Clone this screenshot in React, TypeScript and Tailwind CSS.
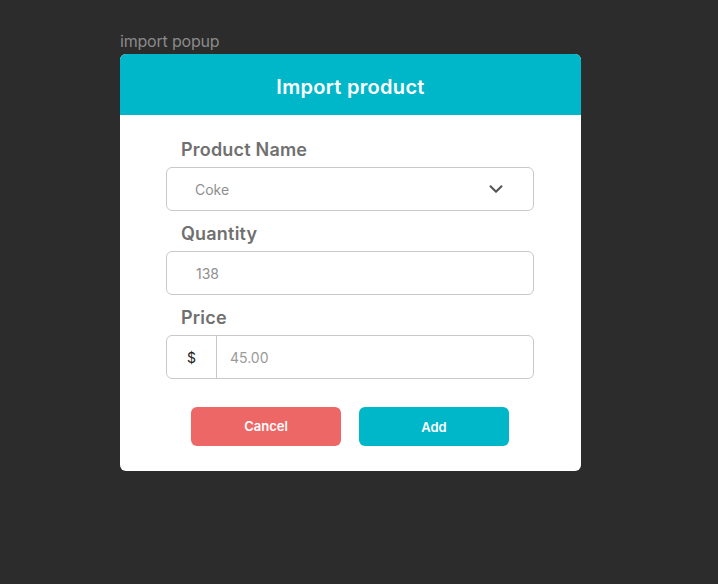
import { ChevronDown } from 'lucide-react'

export default function App() {
  return (
    <div className="w-[718px] h-[584px] bg-[#2c2c2c] font-['Inter',sans-serif]">
      <div className="pt-[31px] pl-[120px]">
        <div className="text-[16px] leading-[20px] text-[#8a8a8a] mb-[3px] tracking-[-0.2px]">import popup</div>

        <div className="w-[461px] bg-white rounded-[6px] overflow-hidden">
          <div className="h-[61px] bg-[#00b7ca] flex items-center justify-center pt-[4px]">
            <span className="text-white text-[20px] font-semibold tracking-[0.3px]">Import product</span>
          </div>

          <div className="flex flex-col items-start pl-[46px] pt-[22px] pb-[25px]">
            <div className="w-[368px] flex flex-col">
              <label className="pl-[15px] text-[18px] leading-[26px] font-semibold text-[#707070] mb-[4px] tracking-[0.2px]">
                Product Name
              </label>
              <div className="h-[44px] border border-[#c8c8c8] rounded-[6px] flex items-center justify-between pl-[28px] pr-[26px]">
                <span className="text-[14px] text-[#8f8f8f]">Coke</span>
                <ChevronDown className="w-[22px] h-[22px] text-[#555]" strokeWidth={2.25} />
              </div>

              <label className="mt-[10px] pl-[15px] text-[18px] leading-[26px] font-semibold text-[#707070] mb-[4px] tracking-[0.2px]">
                Quantity
              </label>
              <div className="h-[44px] border border-[#c8c8c8] rounded-[6px] flex items-center pl-[29px]">
                <span className="text-[14px] text-[#8f8f8f]">138</span>
              </div>

              <label className="mt-[10px] pl-[15px] text-[18px] leading-[26px] font-semibold text-[#707070] mb-[4px] tracking-[0.2px]">
                Price
              </label>
              <div className="h-[44px] border border-[#c8c8c8] rounded-[6px] flex items-stretch">
                <div className="w-[50px] border-r border-[#c8c8c8] flex items-center justify-center text-[14px] text-[#222]">
                  $
                </div>
                <div className="flex items-center pl-[13px] text-[14px] text-[#9a9a9a]">45.00</div>
              </div>
            </div>

            <div className="flex gap-[18px] mt-[28px] ml-[25px]">
              <button className="w-[150px] h-[39px] rounded-[6px] bg-[#ee6767] text-white text-[13px] font-semibold">
                Cancel
              </button>
              <button className="w-[150px] h-[39px] rounded-[6px] bg-[#00b7ca] text-white text-[13px] font-semibold pt-[2px]">
                Add
              </button>
            </div>
          </div>
        </div>
      </div>
    </div>
  )
}
